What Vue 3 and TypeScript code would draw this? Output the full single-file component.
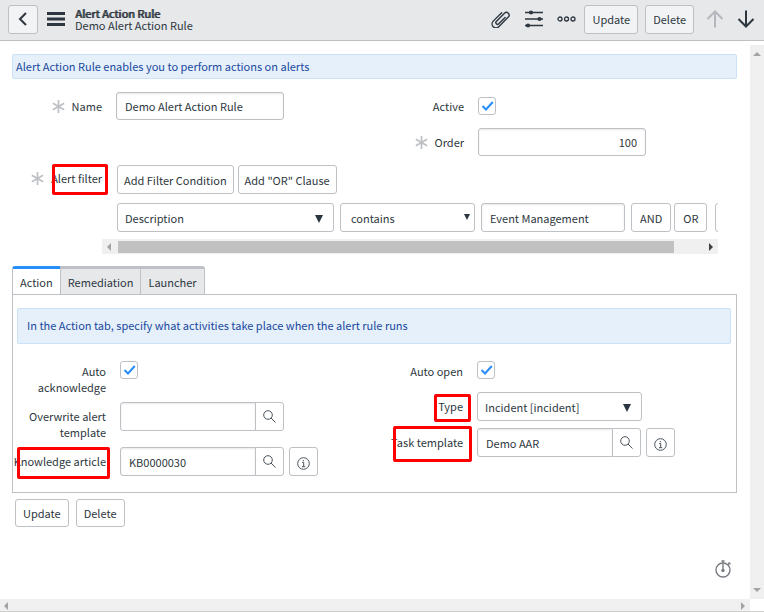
<script setup lang="ts">
import { ref } from 'vue'

const name = ref('Demo Alert Action Rule')
const order = ref('100')
const active = ref(true)
const filterField = ref('Description')
const filterOperator = ref('contains')
const filterValue = ref('Event Management')
const autoAcknowledge = ref(true)
const autoOpen = ref(true)
const overwriteTemplate = ref('')
const knowledgeArticle = ref('KB0000030')
const recordType = ref('Incident [incident]')
const taskTemplate = ref('Demo AAR')

const tabs: string[] = ['Action', 'Remediation', 'Launcher']
const currentTab = ref('Action')
</script>

<template>
  <div class="page">
    <header class="header">
      <button class="btn back" type="button" aria-label="Back">
        <svg width="10" height="14" viewBox="0 0 10 14"><path d="M8 1 2 7l6 6" fill="none" stroke="currentColor" stroke-width="2" /></svg>
      </button>
      <button class="icon-btn menu" type="button" aria-label="Menu">
        <svg width="18" height="14" viewBox="0 0 18 14"><path d="M0 1.5h18M0 7h18M0 12.5h18" stroke="currentColor" stroke-width="2.8" /></svg>
      </button>
      <div class="titles">
        <h1>Alert Action Rule</h1>
        <p>Demo Alert Action Rule</p>
      </div>
      <div class="tools">
        <button class="icon-btn" type="button" aria-label="Attachments">
          <svg width="20" height="18" viewBox="0 0 20 18" fill="none" stroke="currentColor" stroke-width="1.4" stroke-linecap="round">
            <path transform="rotate(-45 10 9)" d="M14 10.800H5a1.700 1.700 0 0 1 0-3.400h11.500a2.700 2.700 0 0 1 0 5.400H3a3.900 3.900 0 0 1 0-7.800h12" />
          </svg>
        </button>
        <button class="icon-btn" type="button" aria-label="Personalize form">
          <svg width="18" height="18" viewBox="0 0 18 18"><path d="M0 2.5h18M0 9h18M0 15.500h18" stroke="currentColor" stroke-width="1.6" /><g fill="currentColor"><circle cx="6" cy="2.500" r="2.100" /><circle cx="14.500" cy="9" r="2.100" /><circle cx="3" cy="15.500" r="2.100" /></g></svg>
        </button>
        <button class="icon-btn dots" type="button" aria-label="More options">
          <svg width="19" height="6" viewBox="0 0 19 6" fill="none" stroke="currentColor" stroke-width="1.300"><circle cx="3" cy="3" r="2" /><circle cx="9.500" cy="3" r="2" /><circle cx="16" cy="3" r="2" /></svg>
        </button>
        <button class="btn" type="button">Update</button>
        <button class="btn delete" type="button">Delete</button>
        <button class="icon-btn previous" type="button" aria-label="Previous record">
          <svg width="18" height="18" viewBox="0 0 18 18"><path d="M9 17.500V1.500M1.500 9 9 1.500 16.500 9" fill="none" stroke="currentColor" stroke-width="2" /></svg>
        </button>
        <button class="icon-btn next" type="button" aria-label="Next record">
          <svg width="18" height="18" viewBox="0 0 18 18"><path d="M9 .5v16M1.500 9 9 16.500 16.500 9" fill="none" stroke="currentColor" stroke-width="2" /></svg>
        </button>
      </div>
    </header>

    <div class="body">
      <main class="content">
        <p class="notice">Alert Action Rule enables you to perform actions on alerts</p>

        <div class="columns top-form">
          <div class="column">
            <div class="row">
              <div class="label-cell">
                <svg class="star" viewBox="0 0 12 12"><path d="M6 0v12M.8 3l10.400 6M.8 9l10.400-6" /></svg>
                <label for="name">Name</label>
              </div>
              <input id="name" v-model="name" class="field wide" type="text" />
            </div>
          </div>
          <div class="column">
            <div class="row">
              <div class="label-cell"><label for="active">Active</label></div>
              <span class="check">
                <input id="active" v-model="active" type="checkbox" />
                <svg v-if="active" viewBox="0 0 12 10"><path d="M1 5l3.500 3.500L11.300 1" /></svg>
              </span>
            </div>
            <div class="row">
              <div class="label-cell">
                <svg class="star" viewBox="0 0 12 12"><path d="M6 0v12M.8 3l10.400 6M.8 9l10.400-6" /></svg>
                <label for="order">Order</label>
              </div>
              <input id="order" v-model="order" class="field wide number" type="text" />
            </div>
          </div>
        </div>

        <section class="filter">
          <div class="label-cell">
            <svg class="star" viewBox="0 0 12 12"><path d="M6 0v12M.8 3l10.400 6M.8 9l10.400-6" /></svg>
            <label for="filter-field" class="marked mark-filter">Alert filter</label>
          </div>
          <div class="filter-area">
            <div class="filter-line actions">
              <button class="btn plain" type="button">Add Filter Condition</button>
              <button class="btn plain" type="button">Add "OR" Clause</button>
            </div>
            <div class="filter-line">
              <span class="select description">
                <select id="filter-field" v-model="filterField"><option>Description</option></select>
                <svg width="8" height="8" viewBox="0 0 8 8"><path d="M0 0h8L4 8z" /></svg>
              </span>
              <span class="select operator">
                <select v-model="filterOperator" aria-label="Operator"><option>contains</option></select>
                <svg width="6" height="6" viewBox="0 0 6 6"><path d="M0 0h6L3 6z" /></svg>
              </span>
              <input v-model="filterValue" class="field value" type="text" aria-label="Value" />
              <div class="logic">
                <button class="btn plain" type="button">AND</button>
                <button class="btn plain" type="button">OR</button>
              </div>
              <button class="btn plain remove" type="button" aria-label="Remove condition"></button>
            </div>
            <div class="scrollbar inner" aria-hidden="true">
              <i class="arrow left"></i>
              <span class="track"><span class="thumb"></span></span>
              <i class="arrow right dark"></i>
            </div>
          </div>
        </section>

        <div class="tabs" role="tablist">
          <button
            v-for="tab in tabs"
            :key="tab"
            class="tab"
            :class="{ current: tab === currentTab }"
            type="button"
            role="tab"
            :aria-selected="tab === currentTab"
            @click="currentTab = tab"
          >{{ tab }}</button>
        </div>

        <section class="panel" role="tabpanel">
          <p class="notice roomy">In the Action tab, specify what activities take place when the alert rule runs</p>
          <div class="columns">
            <div class="column">
              <div class="row">
                <div class="label-cell"><label for="auto-ack">Auto acknowledge</label></div>
                <span class="check">
                  <input id="auto-ack" v-model="autoAcknowledge" type="checkbox" />
                  <svg v-if="autoAcknowledge" viewBox="0 0 12 10"><path d="M1 5l3.500 3.500L11.300 1" /></svg>
                </span>
              </div>
              <div class="row">
                <div class="label-cell"><label for="overwrite">Overwrite alert template</label></div>
                <div class="lookup">
                  <input id="overwrite" v-model="overwriteTemplate" class="field" type="text" />
                  <button class="btn plain" type="button" aria-label="Look up template">
                    <svg width="13" height="13" viewBox="0 0 13 13"><circle cx="5" cy="5" r="4.300" /><path d="m8 8 4.500 4.500" /></svg>
                  </button>
                </div>
              </div>
              <div class="row">
                <div class="label-cell"><label for="article" class="marked mark-article">Knowledge article</label></div>
                <div class="lookup">
                  <input id="article" v-model="knowledgeArticle" class="field" type="text" />
                  <button class="btn plain" type="button" aria-label="Look up article">
                    <svg width="13" height="13" viewBox="0 0 13 13"><circle cx="5" cy="5" r="4.300" /><path d="m8 8 4.500 4.500" /></svg>
                  </button>
                </div>
                <button class="btn plain info" type="button" aria-label="Preview article">
                  <svg width="13" height="13" viewBox="0 0 13 13"><circle cx="6.500" cy="6.500" r="5.800" /><path d="M5.200 5.500h1.500v4M5 9.700h3.200M6.300 3v1.300" /></svg>
                </button>
              </div>
            </div>
            <div class="column">
              <div class="row">
                <div class="label-cell"><label for="auto-open">Auto open</label></div>
                <span class="check">
                  <input id="auto-open" v-model="autoOpen" type="checkbox" />
                  <svg v-if="autoOpen" viewBox="0 0 12 10"><path d="M1 5l3.500 3.500L11.300 1" /></svg>
                </span>
              </div>
              <div class="row">
                <div class="label-cell"><label for="type" class="marked mark-type">Type</label></div>
                <span class="select type">
                  <select id="type" v-model="recordType"><option>Incident [incident]</option></select>
                  <svg width="8" height="8" viewBox="0 0 8 8"><path d="M0 0h8L4 8z" /></svg>
                </span>
              </div>
              <div class="row">
                <div class="label-cell"><label for="task" class="marked mark-task">Task template</label></div>
                <div class="lookup">
                  <input id="task" v-model="taskTemplate" class="field" type="text" />
                  <button class="btn plain" type="button" aria-label="Look up task template">
                    <svg width="13" height="13" viewBox="0 0 13 13"><circle cx="5" cy="5" r="4.300" /><path d="m8 8 4.500 4.500" /></svg>
                  </button>
                </div>
                <button class="btn plain info" type="button" aria-label="Preview task template">
                  <svg width="13" height="13" viewBox="0 0 13 13"><circle cx="6.500" cy="6.500" r="5.800" /><path d="M5.200 5.500h1.500v4M5 9.700h3.200M6.300 3v1.300" /></svg>
                </button>
              </div>
            </div>
          </div>
        </section>

        <div class="footer-actions">
          <button class="btn plain" type="button">Update</button>
          <button class="btn plain" type="button">Delete</button>
        </div>

        <button class="icon-btn timer" type="button" aria-label="Response time">
          <svg width="17" height="18" viewBox="0 0 17 18" fill="none" stroke="currentColor" stroke-width="1.400"><circle cx="8" cy="10" r="7" /><path d="M8 4v6M6.500 1h3M8 1v2M13.500 2.500l2 1.600M14.300 3.400l-1.200 1.400" /><circle cx="8" cy="10.500" r="1" fill="currentColor" /></svg>
        </button>
      </main>
      <div class="scrollbar vertical" aria-hidden="true">
        <i class="arrow up"></i>
        <i class="arrow down"></i>
      </div>
    </div>

    <div class="scrollbar bottom" aria-hidden="true">
      <i class="arrow left"></i>
      <i class="arrow right"></i>
    </div>
  </div>
</template>

<style>
body {
  margin: 0;
  background: #fff;
}
</style>

<style scoped>
.page {
  display: flex;
  flex-direction: column;
  min-height: 100vh;
  color: #2e3740;
  font-family: "Noto Sans CJK SC", "Open Sans", sans-serif;
  font-size: 11px;
  line-height: 16px;
}
.page *,
.page *::after {
  box-sizing: border-box;
}
h1,
p {
  margin: 0;
}
button,
input,
select {
  margin: 0;
  font: inherit;
  color: inherit;
}
svg {
  display: block;
  flex: none;
}

.header {
  display: flex;
  align-items: center;
  height: 41px;
  padding: 0 9px 2px 8px;
  background: #e6e8ea;
  border-bottom: 1px solid #bdc0c4;
}
.titles {
  margin-left: 10px;
}
.titles h1,
.titles p {
  font-size: 11px;
  line-height: 12px;
}
.titles h1 {
  font-weight: 400;
  text-shadow: 1px 0 currentColor;
}
.btn {
  display: flex;
  align-items: center;
  justify-content: center;
  flex: none;
  height: 29px;
  padding: 0 7px;
  background: #f1f3f4;
  border: 1px solid #bdc0c4;
  border-radius: 3px;
  white-space: nowrap;
}
.btn.plain {
  background: #fff;
}
.back {
  width: 30px;
}
.icon-btn {
  display: flex;
  padding: 0;
  background: none;
  border: 0;
}
.menu {
  margin-left: 9px;
}
.tools {
  display: flex;
  align-items: center;
  gap: 14px;
  margin-left: auto;
}
.dots {
  margin-right: -6px;
}
.delete {
  margin-left: -7px;
}
.previous {
  margin-left: -2px;
  color: #b4b8bd;
}
.next {
  margin-left: -1px;
}

.body {
  display: flex;
  flex: 1;
}
.content {
  display: flex;
  flex: 1;
  flex-direction: column;
  min-width: 0;
  padding: 13px 13px 21px 12px;
}
.notice {
  padding: 3px 3px 4px;
  color: #1a489f;
  background: #e5f0fa;
  border: 1px solid #cbe1f8;
  border-radius: 2px;
}
.notice.roomy {
  padding: 8px 9px 10px;
}

.columns {
  display: grid;
  grid-template-columns: 1fr 1fr;
}
.column {
  display: flex;
  flex-direction: column;
  gap: 7px;
}
.row {
  display: flex;
  align-items: flex-start;
  min-height: 24px;
}
.label-cell {
  display: flex;
  flex: none;
  justify-content: flex-end;
  align-items: center;
  gap: 7px;
  width: 90px;
  margin-right: 14px;
  text-align: right;
}
.star {
  width: 13px;
  height: 13px;
  fill: none;
  stroke: #bdc0c4;
  stroke-width: 1.6;
}
.top-form {
  margin: 13px 1px 0 0;
}
.top-form .column {
  gap: 8px;
}
.top-form .row {
  align-items: center;
  min-height: 28px;
}
.field {
  min-width: 0;
  height: 29px;
  padding: 0 8px;
  background: #fff;
  border: 1px solid #bdc0c4;
  border-radius: 3px;
  box-shadow: inset 0 1px 2px #e8e8ea;
}
.wide {
  width: 168px;
  height: 28px;
}
.number {
  text-align: right;
}
.check {
  position: relative;
  display: block;
  flex: none;
  width: 18px;
  height: 18px;
}
.check input {
  display: block;
  width: 18px;
  height: 18px;
  background: #fff;
  border: 1px solid #bdc0c4;
  border-radius: 3px;
  appearance: none;
}
.check svg {
  position: absolute;
  top: 4px;
  left: 3px;
  width: 13px;
  height: 10px;
  fill: none;
  stroke: #278efc;
  stroke-width: 2;
  pointer-events: none;
}
.select {
  position: relative;
  display: block;
  flex: none;
}
.select select {
  display: block;
  width: 100%;
  height: 29px;
  padding: 0 7px;
  background: #fff;
  border: 1px solid #bdc0c4;
  border-radius: 3px;
  appearance: none;
}
.select svg {
  position: absolute;
  top: 12px;
  right: 11px;
  fill: #2b3540;
  pointer-events: none;
}

.filter {
  display: flex;
  align-items: flex-start;
  margin: 9px 19px 0 0;
}
.filter .label-cell {
  margin-right: 0;
  padding-top: 5px;
}
.filter-area {
  flex: 1;
  min-width: 0;
  overflow: hidden;
}
.filter-line {
  display: flex;
  gap: 6px;
  padding-left: 15px;
}
.filter-line.actions {
  gap: 4px;
  margin-bottom: 9px;
}
.actions .btn {
  padding: 0 6px;
}
.description {
  width: 217px;
}
.operator {
  width: 135px;
}
.operator select {
  padding: 0 10px;
}
.operator svg {
  top: 11px;
  right: 5px;
}
.value {
  flex: none;
  width: 144px;
}
.logic {
  display: flex;
  gap: 3px;
}
.logic .btn {
  padding: 0 8px;
}
.remove {
  width: 29px;
  margin-left: 2px;
}

.scrollbar {
  display: flex;
  justify-content: space-between;
  background: #f0f0f0;
}
.scrollbar.inner {
  height: 15px;
  margin-top: 7px;
  align-items: center;
  padding: 0 5px;
}
.track {
  flex: 1;
  height: 12px;
  margin: 0 6px 0 7px;
}
.thumb {
  display: block;
  width: 95%;
  height: 12px;
  background: #c1c1c1;
}
.arrow {
  width: 0;
  height: 0;
  border: 4px solid transparent;
}
.arrow.left {
  border-left: 0;
  border-right-color: #a3a3a3;
}
.arrow.right {
  border-right: 0;
  border-left-color: #a3a3a3;
}
.arrow.right.dark {
  border-left-color: #404040;
}
.arrow.up {
  border-top: 0;
  border-bottom-color: #a3a3a3;
}
.arrow.down {
  border-bottom: 0;
  border-top-color: #a3a3a3;
}
.scrollbar.vertical {
  flex: none;
  flex-direction: column;
  align-items: center;
  width: 14px;
  margin-top: 4px;
  padding: 7px 0;
}
.scrollbar.bottom {
  align-items: center;
  height: 13px;
  padding: 2px 19px 0 4px;
  background: linear-gradient(to left, #fff 14px, #f0f0f0 14px);
  border-bottom: 1px solid #cfcfcb;
}

.tabs {
  display: flex;
  margin: 12px 0 -1px;
}
.tab {
  height: 29px;
  margin-left: -1px;
  padding: 0 7px;
  background: #e6e8ea;
  border: 1px solid #bdc0c4;
  border-top-width: 3px;
}
.tab:first-child {
  margin-left: 0;
  border-top-left-radius: 3px;
}
.tab:last-child {
  border-top-right-radius: 3px;
}
.tab.current {
  background: #fff;
  border-top-color: #278efc;
  border-bottom-color: #fff;
}
.panel {
  padding: 13px 5px 16px 4px;
  border: 1px solid #bdc0c4;
}
.panel .columns {
  margin-top: 17px;
}
.panel .label-cell {
  width: 89px;
  padding-top: 6px;
}
.panel .row:first-child .label-cell {
  padding-top: 2px;
}
.lookup {
  display: flex;
  flex: none;
}
.lookup .field {
  width: 136px;
  border-radius: 3px 0 0 3px;
}
.lookup .btn {
  width: 29px;
  margin-left: -1px;
  padding: 0;
  border-radius: 0 3px 3px 0;
}
.lookup svg,
.info svg {
  fill: none;
  stroke: #4a525b;
  stroke-width: 1;
}
.info {
  width: 29px;
  margin-left: 5px;
  padding: 3px 0 0;
}
.type {
  width: 165px;
}

.marked {
  position: relative;
  white-space: nowrap;
}
.marked::after {
  content: "";
  position: absolute;
  border: 3px solid #ff0000;
  border-radius: 2px;
  pointer-events: none;
}
.mark-filter::after {
  top: -6px;
  right: -6px;
  bottom: -9px;
  width: 56px;
}
.mark-article::after {
  top: -6px;
  right: -4px;
  bottom: -10px;
  width: 93px;
}
.mark-type::after {
  top: -4px;
  right: -8px;
  bottom: -8px;
  width: 37px;
}
.mark-task::after {
  top: -8px;
  right: -9px;
  bottom: -12px;
  width: 79px;
}

.footer-actions {
  display: flex;
  gap: 7px;
  margin: 6px 0 0 3px;
}
.footer-actions .btn {
  height: 28px;
}
.timer {
  align-self: flex-end;
  margin: auto 5px 0 0;
  color: #777b80;
}
</style>
